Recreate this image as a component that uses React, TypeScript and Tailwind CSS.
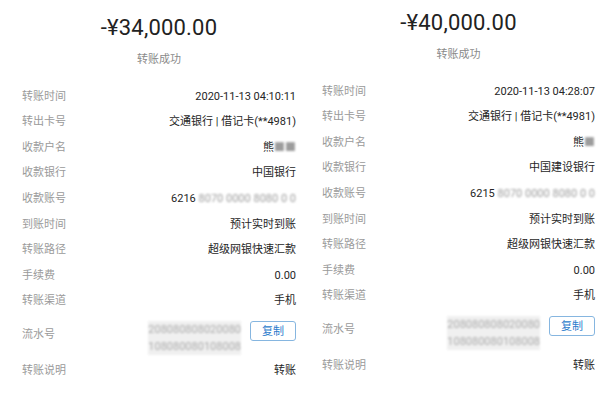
import React from "react";

type PanelProps = {
  amount: string;
  time: string;
  bank: string;
  nameBlur: string;
  acctPrefix: string;
  className: string;
};

function Blur({ text, className = "" }: { text: string; className?: string }) {
  return (
    <span className={`text-[#9c9c9c] blur-[1.3px] select-none ${className}`}>
      {text}
    </span>
  );
}

function Row({ label, children }: { label: string; children: React.ReactNode }) {
  return (
    <div className="flex items-center justify-between h-[25.6px]">
      <span className="text-[#9a9a9a]">{label}</span>
      <span className="text-[#262626]">{children}</span>
    </div>
  );
}

function Panel({ amount, time, bank, nameBlur, acctPrefix, className }: PanelProps) {
  return (
    <div className={`w-[305px] flex flex-col text-[11px] ${className}`}>
      {/* Amount header */}
      <div className="text-center text-[22px] leading-[30px] text-[#222] tracking-[0.2px]">
        {amount}
      </div>
      <div className="text-center text-[11px] leading-[16px] text-[#8a8a8a] mt-[9px]">
        转账成功
      </div>

      <div className="mt-[16px] flex flex-col">
        <Row label="转账时间">{time}</Row>
        <Row label="转出卡号">交通银行 | 借记卡(**4981)</Row>
        <Row label="收款户名">
          熊<Blur text={nameBlur} />
        </Row>
        <Row label="收款银行">{bank}</Row>
        <Row label="收款账号">
          {acctPrefix} <Blur text="8070 0000 8080 0 0" />
        </Row>
        <Row label="到账时间">预计实时到账</Row>
        <Row label="转账路径">超级网银快速汇款</Row>
        <Row label="手续费">0.00</Row>
        <Row label="转账渠道">手机</Row>

        {/* Serial number row */}
        <div className="flex justify-between items-start pt-[7px]">
          <span className="text-[#9a9a9a] leading-[16px] mt-[6px]">流水号</span>
          <div className="flex items-start gap-[9px]">
            <div className="flex flex-col leading-[17px] bg-[#f0f0f0] blur-[1.2px]">
              <span className="text-[#aaaaaa]">208080808020080</span>
              <span className="text-[#aaaaaa]">108080080108008</span>
            </div>
            <button className="w-[46px] h-[20px] border border-[#86b6e0] rounded-[3px] text-[#2c7ccc] text-[11px] leading-none bg-white">
              复制
            </button>
          </div>
        </div>

        <div className="mt-[3px]">
          <Row label="转账说明">转账</Row>
        </div>
      </div>
    </div>
  );
}

export default function App() {
  return (
    <div className="w-[610px] h-[407px] bg-white flex font-['Roboto','Noto_Sans_CJK_SC',sans-serif] overflow-hidden">
      <Panel
        amount="-¥34,000.00"
        time="2020-11-13 04:10:11"
        bank="中国银行"
        nameBlur="■■"
        acctPrefix="6216"
        className="pl-[22px] pr-[9px] pt-[13px]"
      />
      <Panel
        amount="-¥40,000.00"
        time="2020-11-13 04:28:07"
        bank="中国建设银行"
        nameBlur="■"
        acctPrefix="6215"
        className="pl-[17px] pr-[15px] pt-[8px]"
      />
    </div>
  );
}
